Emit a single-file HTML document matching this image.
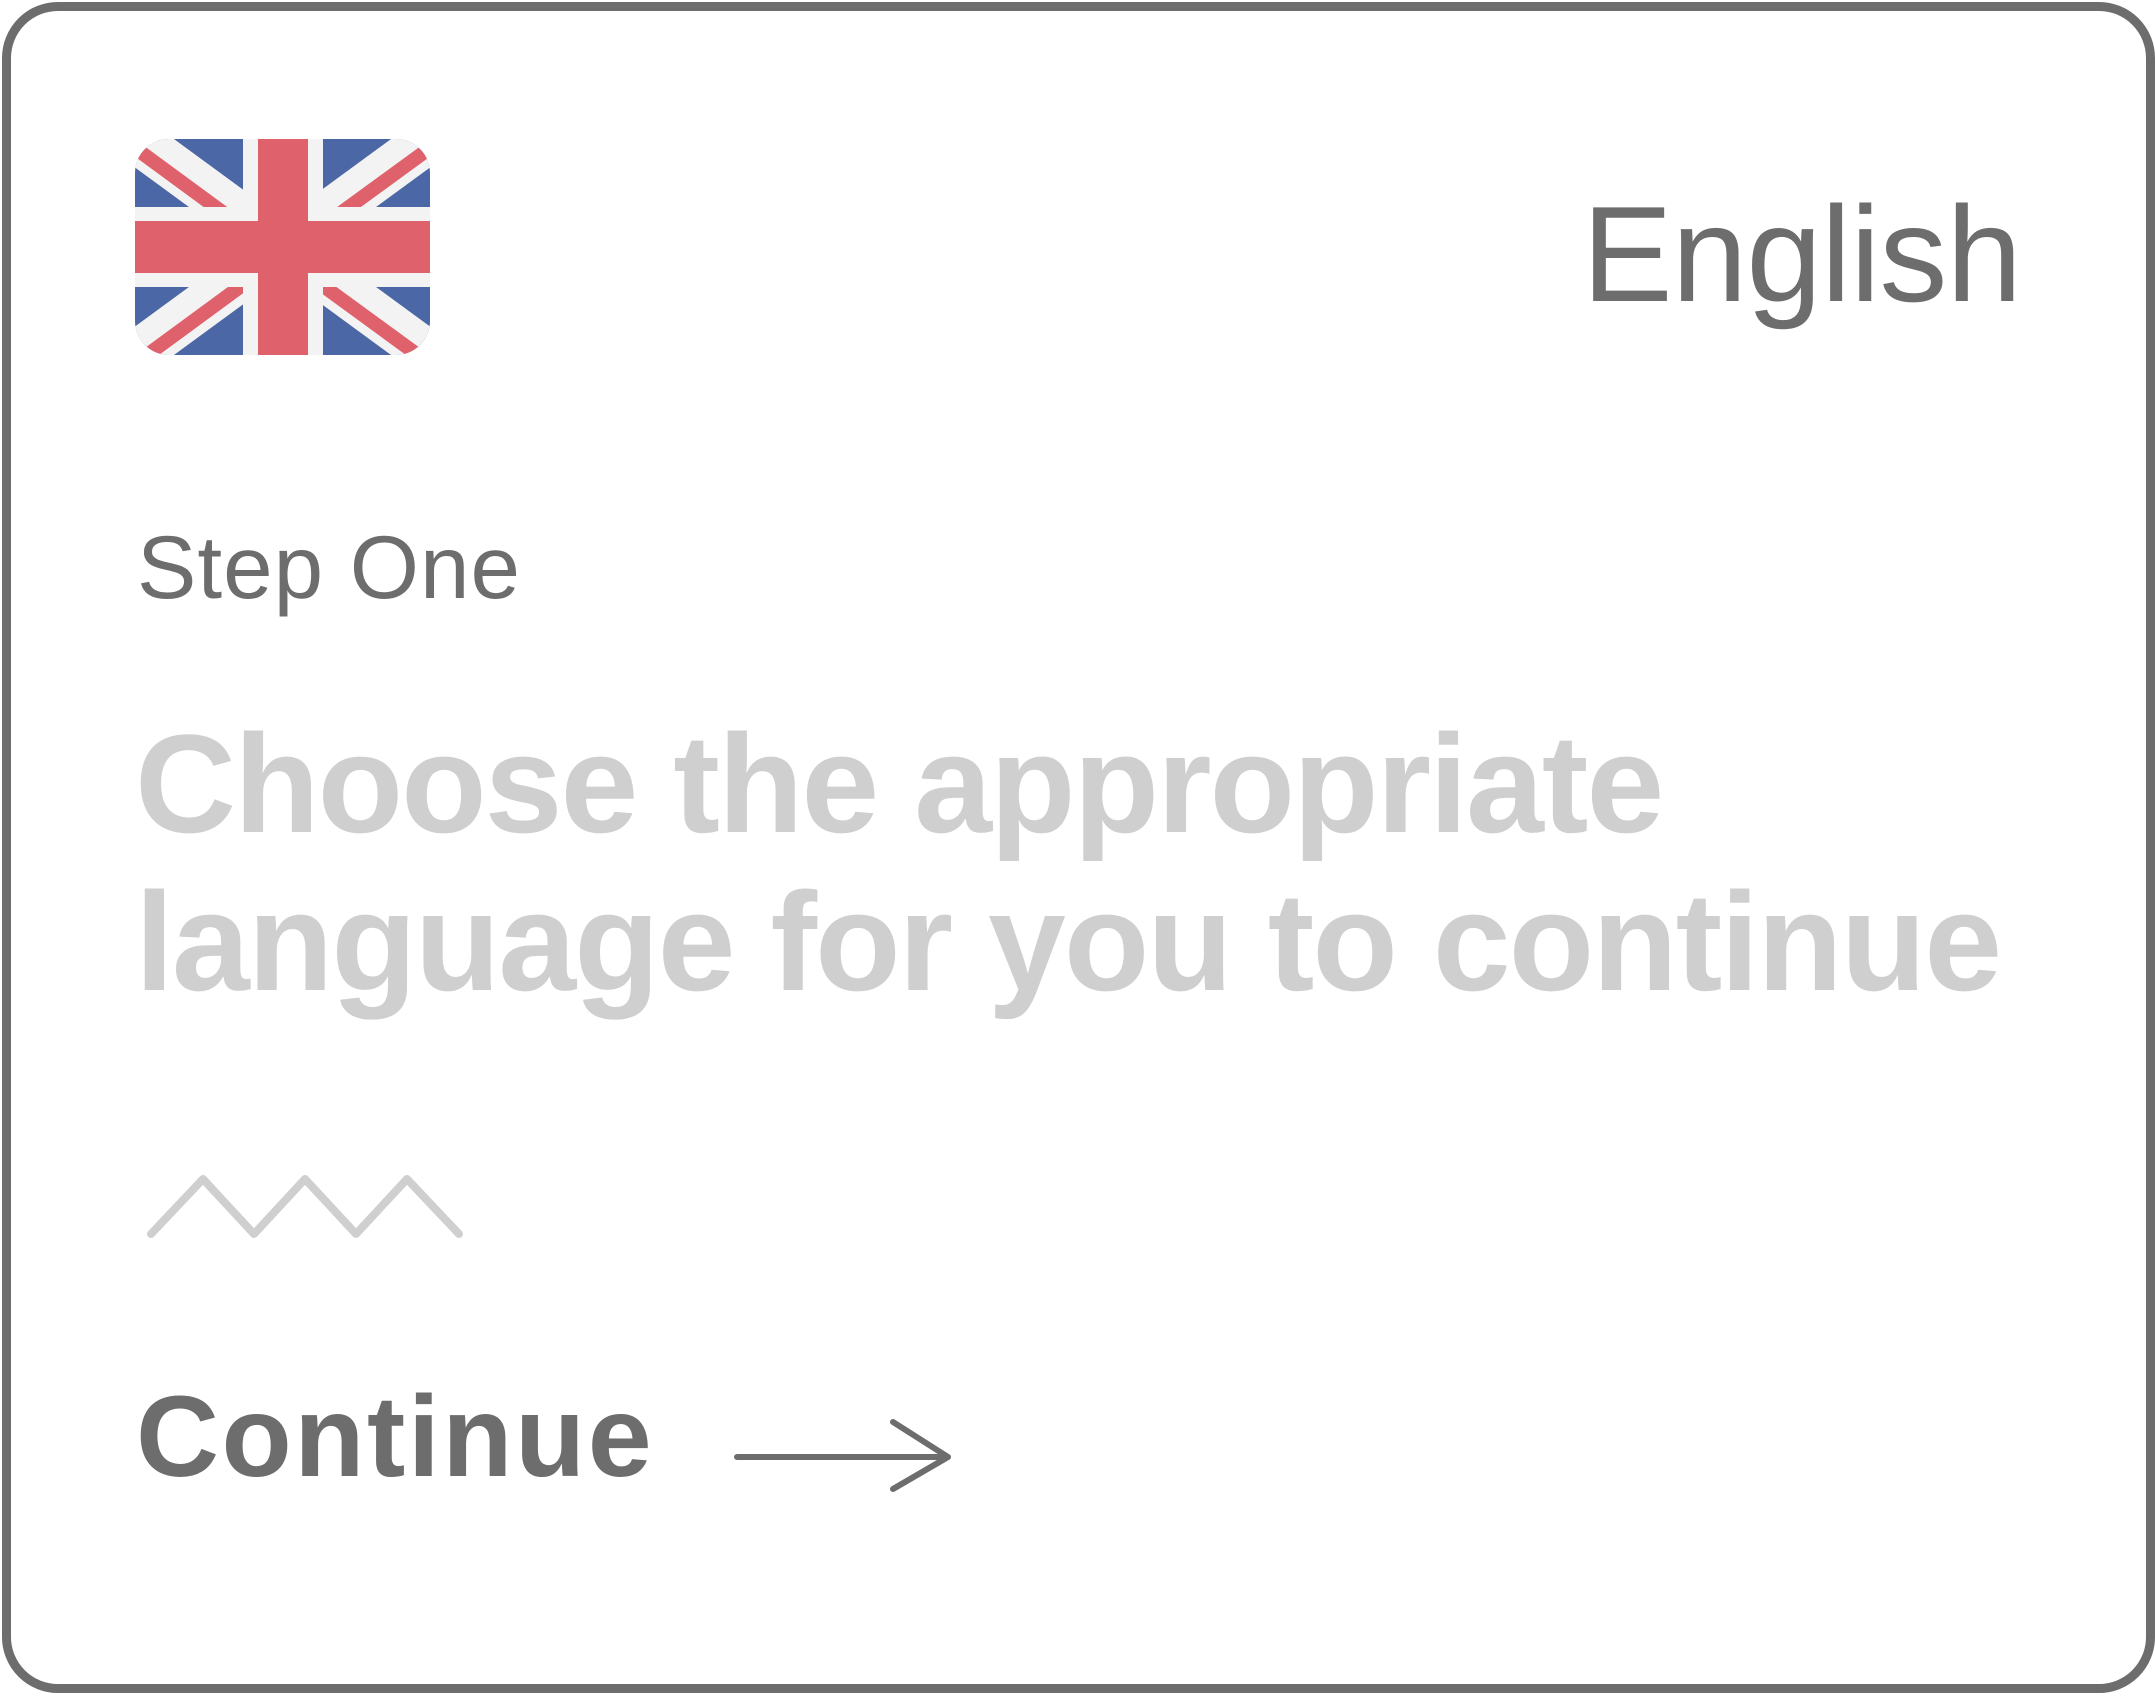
<!DOCTYPE html>
<html><head><meta charset="utf-8"><style>
html,body{margin:0;padding:0;background:#fff;}
body{width:2155px;height:1696px;position:relative;overflow:hidden;font-family:"Liberation Sans",sans-serif;}
.card{position:absolute;left:2px;top:2px;width:2135px;height:1673px;border:9px solid #6d6d6d;border-radius:56px;}
.t{position:absolute;line-height:1;white-space:nowrap;margin:0;}
</style></head><body>
<div class="card"></div>
<svg style="position:absolute;left:135px;top:139px" width="295" height="216" viewBox="0 0 295 216">
<defs><clipPath id="c"><rect width="295" height="216" rx="34"/></clipPath></defs>
<g clip-path="url(#c)">
<rect width="295" height="216" fill="#4b67a5"/>
<path d="M0 0L295 216M295 0L0 216" stroke="#f3f3f3" stroke-width="46"/>
<path d="M0 0L147 108M295 216L147 108" stroke="#df616b" stroke-width="14" transform="translate(-4,6)"/>
<path d="M295 0L147 108M0 216L147 108" stroke="#df616b" stroke-width="14" transform="translate(4,6)"/>
<rect x="0" y="68" width="295" height="80" fill="#f3f3f3"/>
<rect x="108" y="0" width="80" height="216" fill="#f3f3f3"/>
<rect x="0" y="82" width="295" height="52" fill="#df616b"/>
<rect x="123" y="0" width="50" height="216" fill="#df616b"/>
</g></svg>
<div class="t" style="left:1582px;top:186px;font-size:136px;color:#6d6d6d;letter-spacing:-1px;">English</div>
<div class="t" style="left:137px;top:523px;font-size:89px;color:#6d6d6d;letter-spacing:1px;">Step One</div>
<div class="t" style="left:135px;top:714px;font-size:140px;font-weight:bold;color:#cfcfcf;letter-spacing:-2px;">Choose the appropriate</div>
<div class="t" style="left:135px;top:872px;font-size:140px;font-weight:bold;color:#cfcfcf;letter-spacing:-2px;">language for you to continue</div>
<svg style="position:absolute;left:0;top:0" width="2155" height="1696">
<polyline points="151,1234 203,1179 254,1234 305,1179 356,1234 407,1179 459,1234" fill="none" stroke="#cfcfcf" stroke-width="8" stroke-linecap="round" stroke-linejoin="round"/>
<path d="M737 1457H948M893 1422L948 1457L893 1489" fill="none" stroke="#6d6d6d" stroke-width="6" stroke-linecap="round" stroke-linejoin="round"/>
</svg>
<div class="t" style="left:136px;top:1380px;font-size:115px;font-weight:bold;color:#6d6d6d;letter-spacing:2.5px;">Continue</div>
</body></html>
